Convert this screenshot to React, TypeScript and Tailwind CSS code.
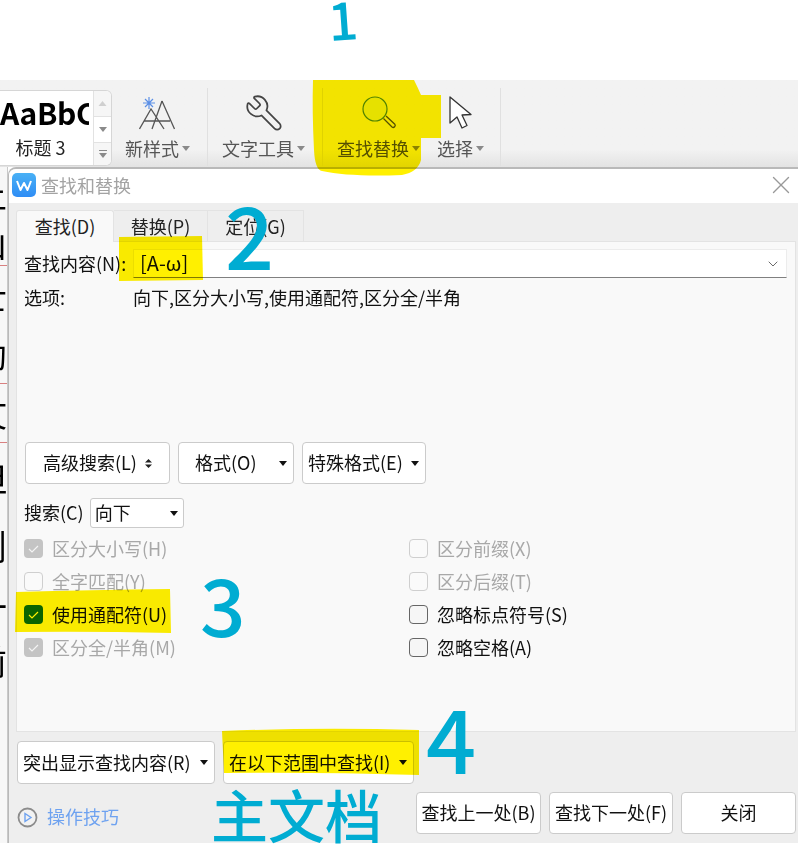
import React from 'react';
import { Wrench, X, ChevronDown } from 'lucide-react';

const FONT = '"Noto Sans CJK SC", "Noto Sans", sans-serif';

const docRows = [
    { ch: '上', h: 'h-[53px]', red: false },
    { ch: '山', h: 'h-[46px]', red: true },
    { ch: '士', h: 'h-[59px]', red: false },
    { ch: '勋', h: 'h-[59px]', red: true },
    { ch: '文', h: 'h-[59px]', red: true },
    { ch: '但', h: 'h-[69px]', red: false },
    { ch: '则', h: 'h-[68px]', red: false },
    { ch: '一', h: 'h-[52px]', red: false },
    { ch: '前', h: 'h-[58px]', red: false },
];

const leftChecks = [
    { label: '区分大小写(H)', state: 'disabledOn' },
    { label: '全字匹配(Y)', state: 'disabledOff' },
    { label: '使用通配符(U)', state: 'on' },
    { label: '区分全/半角(M)', state: 'disabledOn' },
];

const rightChecks = [
    { label: '区分前缀(X)', state: 'disabledOff' },
    { label: '区分后缀(T)', state: 'disabledOff' },
    { label: '忽略标点符号(S)', state: 'off' },
    { label: '忽略空格(A)', state: 'off' },
];

const Caret = () => (
    <svg width="8" height="5" viewBox="0 0 8 5" className="shrink-0">
        <path d="M0 0h8L4 5z" fill="#8a8a8a" />
    </svg>
);

const BlackCaret = () => (
    <svg width="8" height="5" viewBox="0 0 8 5" className="shrink-0">
        <path d="M0 0h8L4 5z" fill="#111" />
    </svg>
);

const Tool = ({ label, width, icon }: { label: string; width: string; icon: React.ReactNode }) => (
    <div className={`flex flex-col items-center ${width}`}>
        <div className="h-[56px] pt-[10px] flex items-center justify-center">{icon}</div>
        <div className="flex items-center gap-[3px] text-[18px] leading-[24px] text-[#555]">
            <span>{label}</span>
            <Caret />
        </div>
    </div>
);

const Check = ({ label, state }: { label: string; state: string }) => (
    <div className="flex items-center h-[33px] gap-[9px]">
        {state === 'disabledOn' && (
            <span className="w-[19px] h-[19px] rounded-[4px] bg-[#c4c4c4] flex items-center justify-center">
                <svg width="11" height="9" viewBox="0 0 11 9"><path d="M1 5l3 3 6-6" fill="none" stroke="#f4f4f4" strokeWidth="1.2" /></svg>
            </span>
        )}
        {state === 'disabledOff' && <span className="w-[19px] h-[19px] rounded-[4px] border border-[#cfcfcf] bg-[#fafafa]" />}
        {state === 'off' && <span className="w-[19px] h-[19px] rounded-[4px] border border-[#666] bg-[#f6f6f6]" />}
        {state === 'on' && (
            <span className="w-[19px] h-[19px] rounded-[4px] bg-[#0b6a0b] flex items-center justify-center">
                <svg width="11" height="9" viewBox="0 0 11 9"><path d="M1 5l3 3 6-6" fill="none" stroke="#fff" strokeWidth="1.2" /></svg>
            </span>
        )}
        <span className={`text-[18px] leading-[24px] -mt-[2px] ${state.startsWith('disabled') ? 'text-[#a8a8a8]' : 'text-[#111]'}`}>{label}</span>
    </div>
);

const App = () => {
    return (
        <div className="relative w-[798px] h-[849px] overflow-hidden bg-white" style={{ fontFamily: FONT }}>
            <div className="h-[80px]" />

            {/* ribbon */}
            <div className="h-[87px] flex bg-linear-to-b from-[#f2f2f2] via-[#f2f2f2] via-80% to-[#e3e3e3]">
                <div className="w-[112px] h-[76px] mt-[10px] flex rounded-r-[6px] border border-l-0 border-[#d6d6d6] bg-white overflow-hidden">
                    <div className="w-[93px] flex flex-col items-center">
                        <div className="w-[89px] mr-[4px] text-[30px] leading-[42px] font-bold tracking-[-0.3px] text-black whitespace-nowrap overflow-hidden">AaBbC</div>
                        <div className="text-[18px] leading-[24px] mt-[2px] mr-[12px] text-[#222]">标题 3</div>
                    </div>
                    <div className="flex-1 flex flex-col border-l border-[#e2e2e2] bg-[#f6f6f6]">
                        <div className="h-[26px] flex items-center justify-center border-b border-[#e2e2e2]">
                            <svg width="9" height="5" viewBox="0 0 8 5"><path d="M0 5h8L4 0z" fill="#d0d0d0" /></svg>
                        </div>
                        <div className="h-[26px] flex items-center justify-center bg-white border-b border-[#e2e2e2]">
                            <Caret />
                        </div>
                        <div className="flex-1 flex flex-col items-center justify-center gap-[2px]">
                            <span className="w-[8px] h-px bg-[#8a8a8a]" />
                            <Caret />
                        </div>
                    </div>
                </div>

                <Tool
                    label="新样式"
                    width="w-[95px] pr-[4px]"
                    icon={
                        <svg width="37" height="34" viewBox="140 95 37 34">
                            <path d="M140.500 128L152 108l13 20M163 100l-10 28M163 100l12.500 28M145 120h13M156 120h15" fill="none" stroke="#555" strokeWidth="1.3" />
                            <path d="M150 96v12M144 102h12M146 98l8 8M154 98l-8 8" fill="none" stroke="#5b8fe6" strokeWidth="1.2" />
                        </svg>
                    }
                />
                <div className="w-px h-[78px] mt-[8px] bg-[#e0e0e0]" />
                <Tool
                    label="文字工具"
                    width="w-[114px] pr-[3px]"
                    icon={<Wrench size={40} strokeWidth={1.05} color="#444" className="-scale-x-100" />}
                />
                <div className="w-px h-[78px] mt-[8px] bg-[#e0e0e0]" />
                <Tool
                    label="查找替换"
                    width="w-[109px] pl-[14px] pr-[12px]"
                    icon={
                        <svg width="36" height="36" viewBox="0 0 36 36">
                            <circle cx="14" cy="14" r="12" fill="#e6f000" stroke="#4f8a10" strokeWidth="1.2" />
                            <path d="M22.500 23.500 31 32a2 2 0 0 0 2.800-2.800L25 21" fill="none" stroke="#555" strokeWidth="1.3" />
                        </svg>
                    }
                />
                <Tool
                    label="选择"
                    width="w-[68px] pl-[5px] pr-[16px]"
                    icon={
                        <svg width="26" height="36" viewBox="0 0 26 36">
                            <path d="M2 2v26l7-6 5 11 5-2.500-5-10.500 9-.5z" fill="#fff" stroke="#333" strokeWidth="1.3" strokeLinejoin="round" />
                        </svg>
                    }
                />
                <div className="w-px h-[78px] mt-[8px] bg-[#e0e0e0]" />
            </div>

            <div className="flex h-[676px] items-start">
                {/* sliver of the document behind the dialog */}
                <div className="w-[8px] h-[676px] shrink-0 flex flex-col overflow-hidden bg-[#f7f7f7] border-r border-[#c9c9c9]">
                    {docRows.map((row, idx) => (
                        <div key={idx} className={`${row.h} flex items-center justify-end shrink-0 ${row.red ? 'border-b border-[#d98080]' : ''}`}>
                            <span className="text-[34px] leading-none text-black shrink-0">{row.ch}</span>
                        </div>
                    ))}
                </div>

                {/* find and replace dialog */}
                <div className="flex-1 h-[676px] flex flex-col bg-[#eeeeee] rounded-tl-[8px] border-l border-t-2 border-[#b9b9b9] border-b-0 overflow-hidden">
                    <div className="h-[34px] bg-white flex items-center pl-[3px] pr-[2px] pb-[3px] shrink-0">
                        <svg width="24" height="24" viewBox="0 0 24 24">
                            <defs>
                                <linearGradient id="wlogo" x1="0" y1="0" x2="0" y2="1">
                                    <stop offset="0" stopColor="#49b1f5" />
                                    <stop offset="1" stopColor="#2f8df5" />
                                </linearGradient>
                            </defs>
                            <rect width="24" height="24" rx="5" fill="url(#wlogo)" />
                            <path d="M5 8l3.500 9 3.500-7 3.500 7 3.500-9" fill="none" stroke="#fff" strokeWidth="2" strokeLinejoin="round" />
                        </svg>
                        <span className="ml-[5px] text-[18px] leading-[24px] text-[#a3a3a3]">查找和替换</span>
                        <X size={30} strokeWidth={1.1} color="#999" className="ml-auto" />
                    </div>

                    <div className="h-[38px] pt-[7px] pl-[7px] flex shrink-0 text-[18px] leading-[30px] text-[#222]">
                        <div className="w-[98px] h-[32px] text-center bg-[#f9f9f9] border border-b-0 border-[#e3e3e3] rounded-t-[3px] relative z-10">查找(D)</div>
                        <div className="w-[94px] h-[31px] text-center border-t border-r border-[#e3e3e3]">替换(P)</div>
                        <div className="w-[96px] h-[31px] text-center border-t border-r border-[#e3e3e3]">定位(G)</div>
                    </div>

                    <div className="ml-[7px] mr-[2px] h-[491px] shrink-0 bg-[#f9f9f9] border border-[#e3e3e3] pl-[7px] pr-[8px] text-[18px] leading-[24px] text-[#111]">
                        <div className="flex items-center mt-[7px]">
                            <span className="w-[109px] shrink-0 -mt-[2px]">查找内容(N):</span>
                            <div className="flex-1 h-[29px] flex items-center bg-white border border-[#ececec] border-b-[#808080] pl-[6px] pr-[5px]">
                                <span className="-mt-[2px] text-[20px]">[A-ω]</span>
                                <ChevronDown size={16} strokeWidth={1.2} color="#444" className="ml-auto" />
                            </div>
                        </div>
                        <div className="flex mt-[7px]">
                            <span className="w-[109px] shrink-0">选项:</span>
                            <span>向下,区分大小写,使用通配符,区分全/半角</span>
                        </div>

                        <div className="flex gap-[8px] mt-[133px] ml-[1px]">
                            <div className="w-[145px] h-[42px] flex items-center justify-center gap-[8px] bg-white border border-[#cbcbcb] rounded-[4px]">
                                <span className="-mt-[2px]">高级搜索(L)</span>
                                <svg width="7" height="9" viewBox="0 0 7 9"><path d="M0 3.500h7L3.500 0zM0 5.500h7L3.500 9z" fill="#222" /></svg>
                            </div>
                            <div className="w-[116px] h-[42px] flex items-center pl-[16px] pr-[6px] bg-white border border-[#cbcbcb] rounded-[4px]">
                                <span className="-mt-[2px]">格式(O)</span>
                                <span className="ml-auto"><BlackCaret /></span>
                            </div>
                            <div className="w-[124px] h-[42px] flex items-center pl-[5px] pr-[6px] bg-white border border-[#cbcbcb] rounded-[4px]">
                                <span className="-mt-[2px]">特殊格式(E)</span>
                                <span className="ml-auto"><BlackCaret /></span>
                            </div>
                        </div>

                        <div className="flex items-center mt-[14px] gap-[6px]">
                            <span className="-mt-[2px]">搜索(C)</span>
                            <div className="w-[94px] h-[30px] flex items-center pl-[4px] pr-[5px] bg-white border border-[#cbcbcb] rounded-[3px]">
                                <span className="-mt-[2px]">向下</span>
                                <span className="ml-auto"><BlackCaret /></span>
                            </div>
                        </div>

                        <div className="grid grid-cols-[385px_1fr] mt-[4px]">
                            <div>
                                {leftChecks.map((c) => <Check key={c.label} label={c.label} state={c.state} />)}
                            </div>
                            <div>
                                {rightChecks.map((c) => <Check key={c.label} label={c.label} state={c.state} />)}
                            </div>
                        </div>
                    </div>

                    <div className="flex-1 flex flex-col pl-[8px] pr-[2px] pt-[9px] text-[18px] leading-[24px] text-[#111]">
                        <div className="flex gap-[8px]">
                            <div className="w-[198px] h-[43px] flex items-center pl-[5px] pr-[6px] bg-white border border-[#cbcbcb] rounded-[4px]">
                                <span className="-mt-[2px]">突出显示查找内容(R)</span>
                                <span className="ml-auto"><BlackCaret /></span>
                            </div>
                            <div className="w-[191px] h-[43px] flex items-center pl-[5px] pr-[6px] bg-white border border-[#cbcbcb] rounded-[4px]">
                                <span className="-mt-[2px]">在以下范围中查找(I)</span>
                                <span className="ml-auto"><BlackCaret /></span>
                            </div>
                        </div>
                        <div className="flex items-start mt-[8px]">
                            <div className="flex items-center gap-[9px] mt-[14px]">
                                <svg width="21" height="21" viewBox="0 0 21 21">
                                    <circle cx="10.500" cy="10.500" r="9" fill="#f2f2f2" stroke="#8c8c8c" strokeWidth="1.800" />
                                    <path d="M8 6.500v8l6-4z" fill="none" stroke="#6ea2f0" strokeWidth="1.400" />
                                </svg>
                                <span className="text-[#6ea2f0] -mt-[2px]">操作技巧</span>
                            </div>
                            <div className="ml-auto flex gap-[8px]">
                                <div className="w-[125px] h-[42px] pb-[3px] flex items-center justify-center bg-white border border-[#cbcbcb] rounded-[4px]">查找上一处(B)</div>
                                <div className="w-[124px] h-[42px] pb-[3px] flex items-center justify-center bg-white border border-[#cbcbcb] rounded-[4px]">查找下一处(F)</div>
                                <div className="w-[115px] h-[42px] pb-[3px] flex items-center justify-center bg-white border border-[#cbcbcb] rounded-[4px]">关闭</div>
                            </div>
                        </div>
                    </div>
                </div>
            </div>

            {/* highlighter marks */}
            <svg width="798" height="849" viewBox="0 0 798 849" className="absolute inset-0 mix-blend-multiply pointer-events-none">
                <g fill="#fff000">
                    <path d="M313 80H414Q418 88 421 95H441V138H421V160Q418 172 402 175Q350 177 322 171Q315 170 314 150Q312 110 313 80Z" />
                    <path d="M119 237L202 236 203 280 119 281Z" />
                    <path d="M16 592Q90 590 170 589L171 633Q90 631 15 632Z" />
                    <path d="M222 731Q320 727 419 730V775Q320 772 224 773Z" />
                </g>
            </svg>

            {/* handwritten annotations */}
            <span className="absolute left-[328px] top-[-14px] text-[52px] leading-[64px] font-medium text-[#00acd2] -rotate-[4deg]">1</span>
            <span className="absolute left-[225px] top-[181px] text-[86px] leading-[104px] font-medium text-[#00acd2]">2</span>
            <span className="absolute left-[200px] top-[553px] text-[80px] leading-[98px] font-medium text-[#00acd2]">3</span>
            <span className="absolute left-[426px] top-[682px] text-[88px] leading-[108px] font-medium text-[#00acd2]">4</span>
            <span className="absolute left-[211px] top-[778px] text-[57px] leading-[70px] font-medium text-[#00acd2] whitespace-nowrap">主文档</span>
        </div>
    );
};

export default App;
